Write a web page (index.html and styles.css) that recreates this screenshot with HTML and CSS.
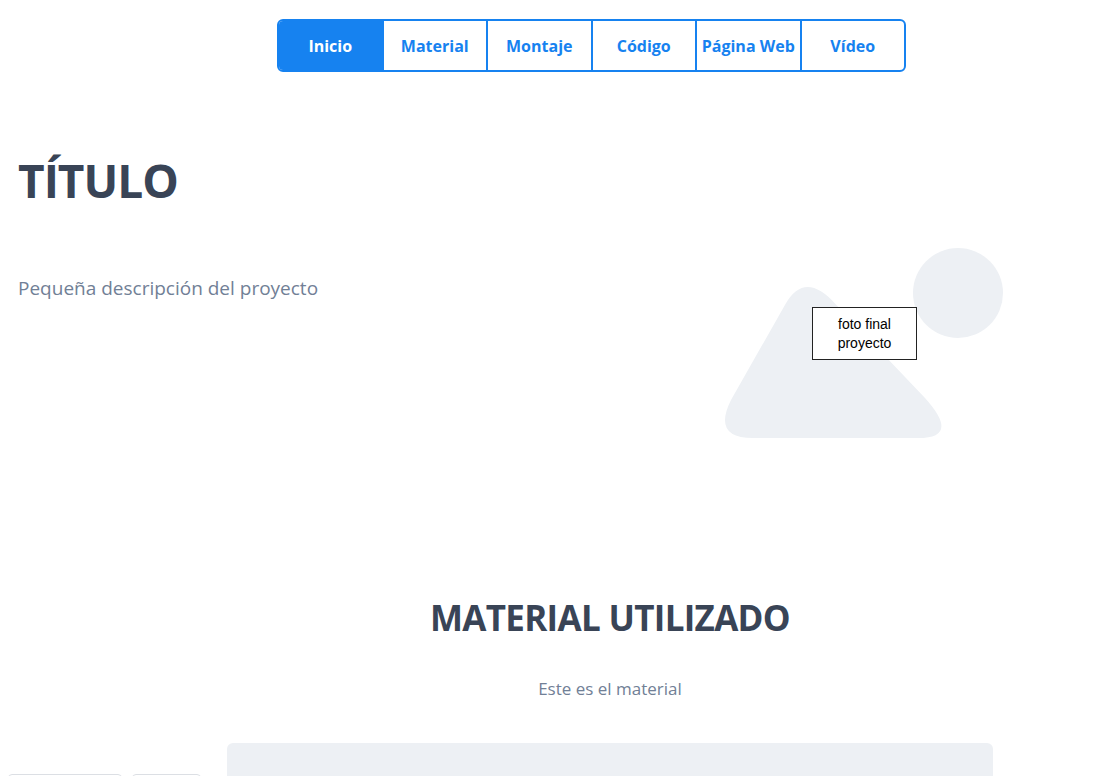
FILE: index.html
```html
<!DOCTYPE html>
<html lang="es">
<head>
<meta charset="utf-8">
<title>Proyecto</title>
<link rel="stylesheet" href="styles.css">
</head>
<body>
<header class="topbar">
  <nav class="tabs-nav">
    <a class="tab tab-active" href="#">Inicio</a>
    <a class="tab" href="#">Material</a>
    <a class="tab" href="#">Montaje</a>
    <a class="tab" href="#">Código</a>
    <a class="tab" href="#">Página Web</a>
    <a class="tab" href="#">Vídeo</a>
  </nav>
</header>

<section class="hero">
  <div class="hero-text">
    <h1 class="hero-title">TÍTULO</h1>
    <p class="hero-desc">Pequeña descripción del proyecto</p>
  </div>
  <div class="hero-media">
    <svg class="placeholder" width="310" height="200" viewBox="0 0 310 200" aria-hidden="true">
      <path fill="#edf0f4" d="M85.5 64 Q105 30 135.5 64 L225 158 Q261 198 218 198 L53 198 Q12 198 31 160 Z"/>
      <circle cx="258" cy="53" r="45" fill="#edf0f4"/>
    </svg>
    <div class="photo-label">foto final<br>proyecto</div>
  </div>
</section>

<section class="material">
  <div class="material-head">
    <h2 class="material-title">MATERIAL UTILIZADO</h2>
    <p class="material-desc">Este es el material</p>
  </div>
  <div class="material-body">
    <div class="mini-tabs">
      <div class="mini-tab mini-tab-wide"></div>
      <div class="mini-tab mini-tab-narrow"></div>
    </div>
    <div class="material-panel"></div>
  </div>
</section>
</body>
</html>
```

FILE: styles.css
```css
html, body {
  margin: 0;
  padding: 0;
  background: #ffffff;
}

body {
  font-family: "Open Sans", "Noto Sans", sans-serif;
  overflow: hidden;
  height: 776px;
}

.topbar {
  padding: 19px 0 0 277px;
}

.tabs-nav {
  display: flex;
  width: 629px;
  height: 53px;
  box-sizing: border-box;
  border: 2px solid #1682f0;
  border-radius: 6px;
  overflow: hidden;
}

.tab {
  flex: 1;
  display: flex;
  align-items: center;
  justify-content: center;
  color: #1682f0;
  font-weight: 700;
  font-size: 16px;
  text-decoration: none;
  border-left: 2px solid #1682f0;
  white-space: nowrap;
}

.tab:first-child {
  border-left: none;
}

.tab-active {
  background: #1682f0;
  color: #ffffff;
}

.hero {
  display: flex;
  justify-content: space-between;
  padding: 81px 96px 0 18px;
}

.hero-title {
  margin: 0;
  font-size: 46px;
  line-height: 1.2;
  font-weight: 700;
  letter-spacing: -1px;
  color: #394456;
}

.hero-desc {
  margin: 66px 0 0;
  font-size: 19px;
  line-height: 1.5;
  color: #718096;
}

.hero-media {
  position: relative;
  margin-top: 87px;
  width: 310px;
  height: 200px;
}

.placeholder {
  display: block;
}

.photo-label {
  position: absolute;
  left: 112px;
  top: 67px;
  width: 105px;
  height: 53px;
  box-sizing: border-box;
  border: 1px solid #222222;
  background: #ffffff;
  font-family: "Liberation Sans", Arial, sans-serif;
  font-size: 14px;
  line-height: 19px;
  color: #000000;
  text-align: center;
  padding-top: 7px;
}

.material {
  padding-top: 157px;
}

.material-head {
  padding-left: 114px;
  text-align: center;
}

.material-title {
  margin: 0;
  font-size: 35px;
  line-height: 1.2;
  font-weight: 700;
  letter-spacing: -0.7px;
  color: #394456;
}

.material-desc {
  margin: 37px 0 0;
  font-size: 17px;
  line-height: 1.5;
  color: #718096;
}

.material-body {
  display: flex;
  margin-top: 41px;
}

.mini-tabs {
  display: flex;
  gap: 10px;
  width: 219px;
  padding: 31px 0 0 8px;
}

.mini-tab {
  height: 40px;
  box-sizing: border-box;
  border: 1px solid #dcdfe4;
  border-radius: 4px 4px 0 0;
}

.mini-tab-wide {
  width: 114px;
}

.mini-tab-narrow {
  width: 69px;
}

.material-panel {
  width: 766px;
  height: 300px;
  background: #edf0f4;
  border-radius: 6px 6px 0 0;
}
```
